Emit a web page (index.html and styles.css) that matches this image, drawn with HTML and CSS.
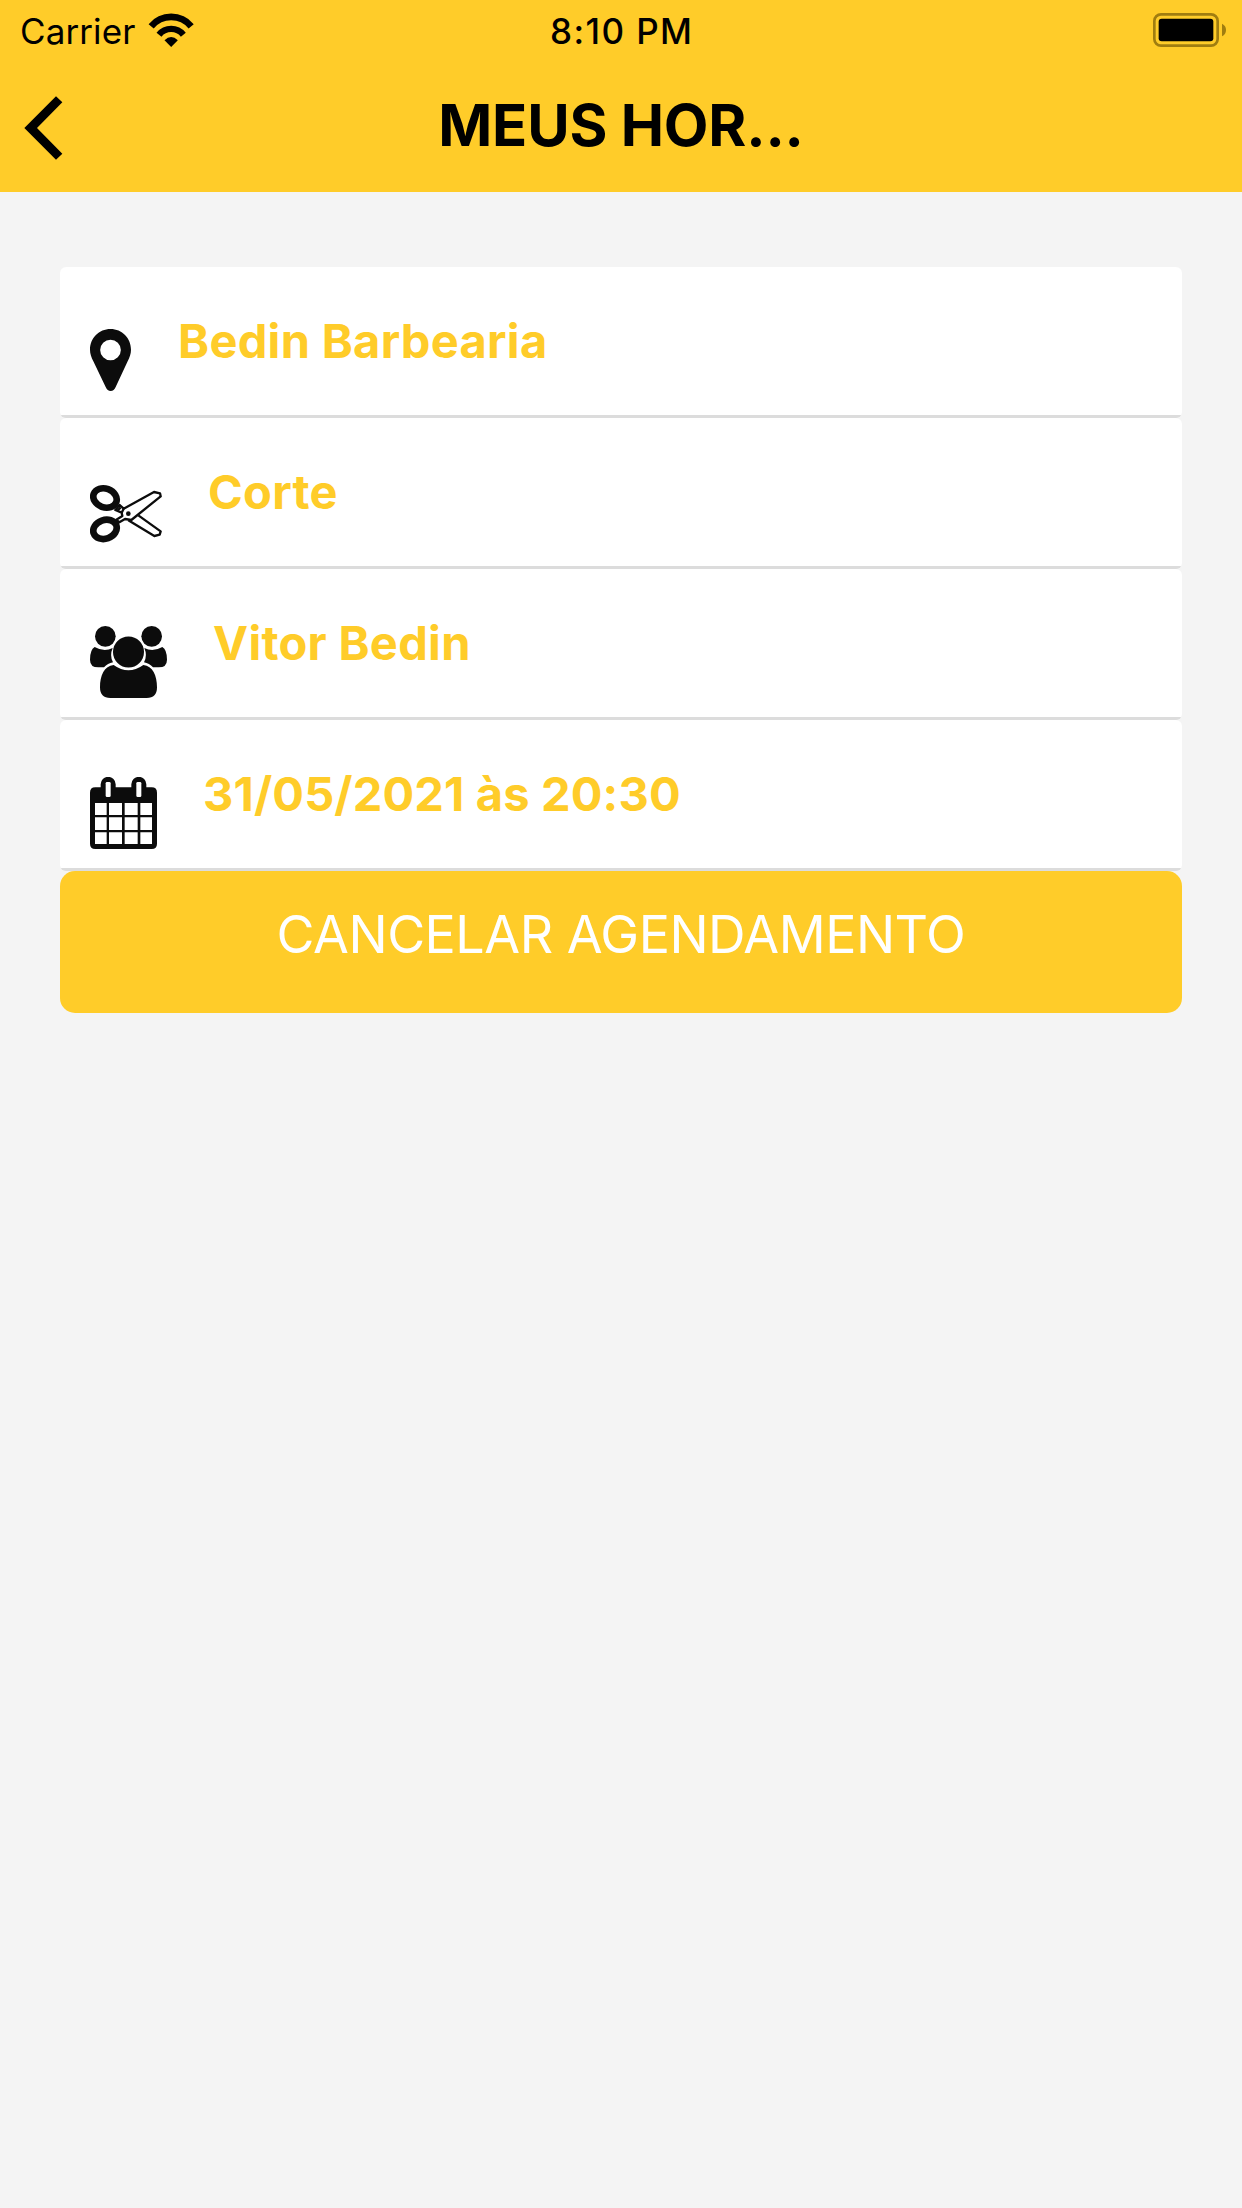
FILE: index.html
```html
<!DOCTYPE html>
<html lang="pt-BR">
<head>
<meta charset="utf-8">
<title>Meus Horários</title>
<link rel="stylesheet" href="styles.css">
</head>
<body>
<header class="header">
  <div class="status">
    <div class="status-left">
      <span class="carrier">Carrier</span>
      <svg class="wifi" viewBox="447 36 138 102" aria-hidden="true">
        <path d="M456.500 76A78 78 0 0 1 576.500 76" fill="none" stroke="#000" stroke-width="20"/>
        <path d="M480 101A47 47 0 0 1 553 101" fill="none" stroke="#000" stroke-width="19"/>
        <path d="M496.500 118Q516.500 98 536.500 118L516.500 138Z"/>
      </svg>
    </div>
    <span class="time">8:10 PM</span>
    <div class="status-right">
      <svg class="battery" viewBox="93 39 222 102" aria-hidden="true">
        <rect x="97" y="43" width="190" height="94" rx="20" fill="none" stroke="#a07d10" stroke-width="8"/>
        <rect x="110" y="56" width="164" height="68" rx="9"/>
        <path d="M300 71Q312 77 312 90T300 109Z" fill="#a07d10"/>
      </svg>
    </div>
  </div>
  <div class="nav">
    <svg class="back" viewBox="72 287 117 192" aria-hidden="true"><path d="M73 383L168 288L187 306L111 383L187 460L168 478Z"/></svg>
    <h1 class="title">MEUS HOR...</h1>
  </div>
</header>
<main class="content">
  <ul class="list">
    <li class="row">
      <svg class="icon icon-pin" viewBox="120 207 123 216" aria-hidden="true">
        <path fill-rule="evenodd" d="M181.500 222C147 222 120 249 120 284C120 296 124 307 130 319L167 396Q172 408 182 408Q192 408 197 396L233 319C239 307 243 296 243 284C243 249 216 222 181.500 222ZM181.500 254A31 31 0 1 1 181.500 316A31 31 0 1 1 181.500 254Z"/>
      </svg>
      <span class="label label-place">Bedin Barbearia</span>
    </li>
    <li class="row">
      <svg class="icon icon-scissors" viewBox="30 15 216 216" aria-hidden="true">
        <g fill="none" stroke="#0c0c0c" stroke-linejoin="round">
          <ellipse cx="75" cy="84" rx="36" ry="28" transform="rotate(20 75 84)" stroke-width="20"/>
          <ellipse cx="75" cy="178" rx="36" ry="28" transform="rotate(-20 75 178)" stroke-width="20"/>
          <path d="M175 136L242 184L239 194L223 198L145 151" stroke-width="7"/>
          <path d="M131 116L222 66L240 70L242 79L154 150L135 147L118 157L109 149L127 138L125 128L106 120L119 105Z" stroke-width="7"/>
          <path d="M131 116L125 128M113 121L122 112" stroke-width="7"/>
        </g>
        <circle cx="145" cy="131" r="7"/>
      </svg>
      <span class="label label-service">Corte</span>
    </li>
    <li class="row">
      <svg class="icon icon-people" viewBox="30 48 231 216" aria-hidden="true">
        <circle cx="76" cy="79" r="31"/>
        <circle cx="215" cy="79" r="31"/>
        <path d="M44 111Q72 127 98 114Q88 137 99 157Q83 160 72 172H55Q30 172 30 149Q30 119 44 111Z"/>
        <path d="M247 111Q219 127 193 114Q203 137 192 157Q208 160 219 172H236Q261 172 261 149Q261 119 247 111Z"/>
        <circle cx="145.500" cy="126" r="46.500"/>
        <path d="M101 165Q145 197 190 165C218 168 231 196 231 232Q231 264 200 264H91Q60 264 60 232C60 196 73 168 101 165Z"/>
      </svg>
      <span class="label label-person">Vitor Bedin</span>
    </li>
    <li class="row">
      <svg class="icon icon-calendar" viewBox="30 36 201 216" aria-hidden="true">
        <path fill-rule="evenodd" d="M46 67H62V58A22.500 22.500 0 0 1 107 58V67H154V58A22.500 22.500 0 0 1 199 58V67H215Q231 67 231 83V236Q231 252 215 252H46Q30 252 30 236V83Q30 67 46 67Z"/>
        <g fill="#fff">
          <rect x="77" y="51" width="15" height="45" rx="4"/><rect x="169" y="51" width="15" height="45" rx="4"/>
          <path d="M45 114H80V150H45ZM87 114H126V150H87ZM134 114H173V150H134ZM181 114H216V150H181ZM45 157H80V195H45ZM87 157H126V195H87ZM134 157H173V195H134ZM181 157H216V195H181ZM45 202H80V237H45ZM87 202H126V237H87ZM134 202H173V237H134ZM181 202H216V237H181Z"/>
        </g>
      </svg>
      <span class="label label-date">31/05/2021 às 20:30</span>
    </li>
  </ul>
  <button class="cancel" type="button"><span class="cancel-text">CANCELAR AGENDAMENTO</span></button>
</main>
</body>
</html>
```

FILE: styles.css
```css
* { box-sizing: border-box; margin: 0; padding: 0; }
body { min-height: 2208px; background: #f4f4f4; font-family: Inter, "Liberation Sans", sans-serif; color: #000; }
svg { display: block; flex: none; }
.header { height: 192px; background: #ffcc29; }
.status { display: grid; grid-template-columns: 1fr auto 1fr; height: 60px; line-height: 44px; padding: 9px 15px 0; }
.status-left { display: flex; gap: 13px; padding-left: 5px; }
.carrier { font-size: 35px; letter-spacing: 0.1px; }
.wifi { width: 46px; height: 34px; margin-top: 4px; }
.time { font-size: 35px; font-weight: 500; letter-spacing: 1.4px; margin-right: -1.4px; }
.status-right { display: flex; justify-content: flex-end; }
.battery { width: 74px; height: 34px; margin-top: 4px; }
.nav { display: grid; grid-template-columns: 39px 1fr 39px; height: 132px; padding: 0 24px; }
.back { width: 39px; height: 64px; margin-top: 36px; }
.title { font-size: 58px; font-weight: 700; letter-spacing: -0.2px; line-height: 72px; padding-top: 29px; text-align: center; white-space: nowrap; }
.content { padding: 75px 60px 0; }
.list { list-style: none; }
.row { display: flex; gap: 46px; height: 151px; padding: 44px 30px 0; background: linear-gradient(#dcdcdc, #dcdcdc) bottom / 100% 3px no-repeat #fff; border-radius: 6px; }
.icon { height: 72px; margin-top: 13px; fill: #0c0c0c; }
.icon-pin { width: 41px; }
.icon-scissors { width: 72px; }
.icon-people { width: 77px; }
.icon-calendar { width: 67px; }
.label { font-size: 47px; font-weight: 700; line-height: 60px; letter-spacing: 0.3px; color: #ffcc29; white-space: nowrap; }
.label-place { padding-left: 1px; }
.label-date { letter-spacing: 0.15px; }
.cancel { display: block; width: 100%; height: 142px; padding-bottom: 14px; border: 0; border-radius: 15px; background: #ffcc29; color: #fff; font-family: inherit; font-size: 52px; font-weight: 400; letter-spacing: -0.5px; line-height: 64px; }
```
